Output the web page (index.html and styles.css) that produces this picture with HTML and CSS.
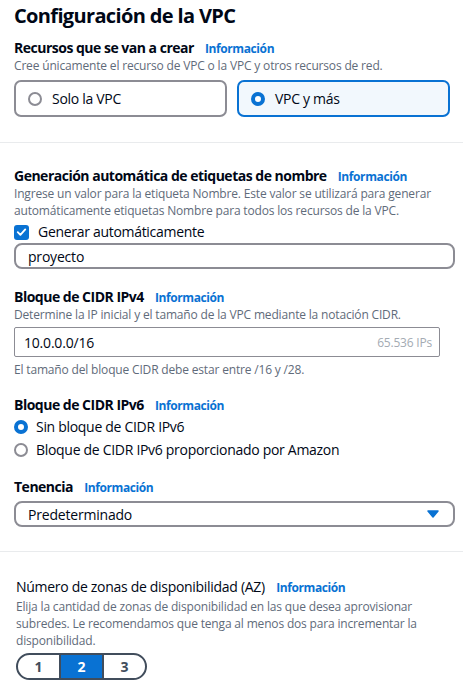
FILE: index.html
```html
<!DOCTYPE html>
<html lang="es">
<head>
<meta charset="utf-8">
<link rel="stylesheet" href="styles.css">
</head>
<body>
<div class="page">
  <h1 class="title">Configuración de la VPC</h1>

  <div class="field f-res">
    <div class="label">Recursos que se van a crear <span class="info">Información</span></div>
    <div class="desc">Cree únicamente el recurso de VPC o la VPC y otros recursos de red.</div>
    <div class="tiles">
      <div class="tile"><span class="radio"></span>Solo la VPC</div>
      <div class="tile sel"><span class="radio on"></span>VPC y más</div>
    </div>
  </div>

  <hr class="divider d1">

  <div class="field f-tag">
    <div class="label">Generación automática de etiquetas de nombre <span class="info">Información</span></div>
    <div class="desc">Ingrese un valor para la etiqueta Nombre. Este valor se utilizará para generar automáticamente etiquetas Nombre para todos los recursos de la VPC.</div>
    <div class="check-row">
      <span class="checkbox"><svg viewBox="0 0 16 16" width="16" height="16"><path d="M4 8.2 L6.8 11 L12 5.2" fill="none" stroke="#fff" stroke-width="2" stroke-linecap="round" stroke-linejoin="round"/></svg></span>
      Generar automáticamente
    </div>
    <div class="input round">proyecto</div>
  </div>

  <div class="field f-v4">
    <div class="label">Bloque de CIDR IPv4 <span class="info">Información</span></div>
    <div class="desc">Determine la IP inicial y el tamaño de la VPC mediante la notación CIDR.</div>
    <div class="input cidr"><span>10.0.0.0/16</span><span class="hint">65.536 IPs</span></div>
    <div class="desc constraint">El tamaño del bloque CIDR debe estar entre /16 y /28.</div>
  </div>

  <div class="field f-v6">
    <div class="label">Bloque de CIDR IPv6 <span class="info">Información</span></div>
    <div class="radio-row first"><span class="radio on"></span>Sin bloque de CIDR IPv6</div>
    <div class="radio-row"><span class="radio"></span>Bloque de CIDR IPv6 proporcionado por Amazon</div>
  </div>

  <div class="field f-ten">
    <div class="label">Tenencia <span class="info">Información</span></div>
    <div class="input round select"><span>Predeterminado</span><svg width="12" height="8" viewBox="0 0 12 8"><path d="M1 1 H11 L6 7 Z" fill="#0972d3" stroke="#0972d3" stroke-width="1.5" stroke-linejoin="round"/></svg></div>
  </div>

  <hr class="divider d2">

  <div class="field f-az">
    <div class="label normal">Número de zonas de disponibilidad (AZ) <span class="info">Información</span></div>
    <div class="desc">Elija la cantidad de zonas de disponibilidad en las que desea aprovisionar subredes. Le recomendamos que tenga al menos dos para incrementar la disponibilidad.</div>
    <div class="segments">
      <span class="seg">1</span><span class="seg active">2</span><span class="seg">3</span>
    </div>
  </div>
</div>
</body>
</html>
```

FILE: styles.css
```css
* { box-sizing: border-box; }
html, body { margin: 0; padding: 0; background: #fff; }
body {
  font-family: "Open Sans", "Noto Sans", sans-serif;
  color: #000716;
  width: 463px;
  height: 684px;
  overflow: hidden;
}
.page { padding: 0 0 0 14px; }
.title {
  margin: 0;
  padding-top: 3px;
  height: 29px;
  font-size: 20px;
  line-height: 26px;
  font-weight: 700;
  letter-spacing: -0.65px;
}
.field { display: flex; flex-direction: column; }
.label {
  display: flex;
  align-items: baseline;
  height: 18px;
  font-size: 14px;
  font-weight: 700;
  line-height: 18px;
  letter-spacing: -0.5px;
  white-space: pre;
}
.label.normal { font-weight: 400; letter-spacing: -0.3px; }
.info {
  color: #0972d3;
  font-size: 12px;
  font-weight: 700;
  margin-left: 8px;
  letter-spacing: -0.4px;
}
.desc {
  font-size: 12px;
  line-height: 17px;
  color: #5f6b7a;
  padding-right: 14px;
  letter-spacing: -0.17px;
}
.f-res { margin-top: 10px; }
.tiles { display: flex; gap: 10px; margin-top: 6px; padding-right: 13px; }
.tile {
  flex: 1;
  height: 37px;
  border: 2px solid #8c8c94;
  border-radius: 7px;
  display: flex;
  align-items: center;
  padding-left: 12px;
  font-size: 14px;
  letter-spacing: -0.3px;
}
.tile.sel { border-color: #0972d3; background: #f2f8fd; }
.radio {
  width: 14px; height: 14px;
  border: 2px solid #8c8c94;
  border-radius: 50%;
  margin-right: 10px;
  flex: none;
  background: #fff;
}
.radio.on { border: 4px solid #0972d3; }
.divider {
  margin: 25px 0 0 -14px;
  border: 0;
  border-top: 1px solid #e9ebed;
  height: 0;
}
.f-tag { margin-top: 24px; }
.f-tag .desc { padding-right: 20px; }
.check-row {
  display: flex; align-items: center;
  height: 20px;
  font-size: 14px; line-height: 20px;
  margin-top: 3px;
  letter-spacing: -0.3px;
}
.checkbox {
  width: 15px; height: 15px; border-radius: 3px;
  background: #0972d3;
  display: inline-flex; align-items: center; justify-content: center;
  margin-right: 9px;
}
.input {
  font-size: 14px;
  display: flex; align-items: center;
  letter-spacing: -0.2px;
}
.input.round {
  margin-top: 1px;
  width: 441px;
  height: 26px;
  border: 2px solid #8c8c94;
  border-radius: 8px;
  padding: 0 12px;
}
.f-v4 { margin-top: 19px; }
.cidr {
  margin-top: 4px;
  width: 426px;
  height: 30px;
  border: 1px solid #8c8c94;
  border-radius: 2px;
  padding: 0 7px 0 9px;
  justify-content: space-between;
}
.hint { color: #a4abb3; font-size: 12px; letter-spacing: -0.2px; }
.constraint { margin-top: 4px; }
.f-v6 { margin-top: 18px; }
.radio-row {
  display: flex; align-items: center;
  height: 20px;
  font-size: 14px; line-height: 20px;
  margin-top: 3px;
  letter-spacing: -0.3px;
}
.radio-row .radio { margin-right: 8px; }
.f-ten { margin-top: 18px; }
.f-ten .input { margin-top: 5px; }
.select { justify-content: space-between; padding-right: 14px !important; }
.d2 { margin-top: 24px; }
.f-az { margin-top: 26px; padding-left: 2px; }
.f-az .desc { padding-right: 14px; margin-top: 2px; }
.segments {
  display: flex;
  width: 131px;
  height: 27px;
  margin-top: 4px;
  border: 2px solid #414d5c;
  border-radius: 14px;
  overflow: hidden;
}
.seg {
  flex: 1;
  display: flex; align-items: center; justify-content: center;
  font-size: 14px; font-weight: 700; color: #414d5c;
}
.seg + .seg { border-left: 2px solid #414d5c; }
.seg.active { background: #0972d3; color: #fff; }
```
